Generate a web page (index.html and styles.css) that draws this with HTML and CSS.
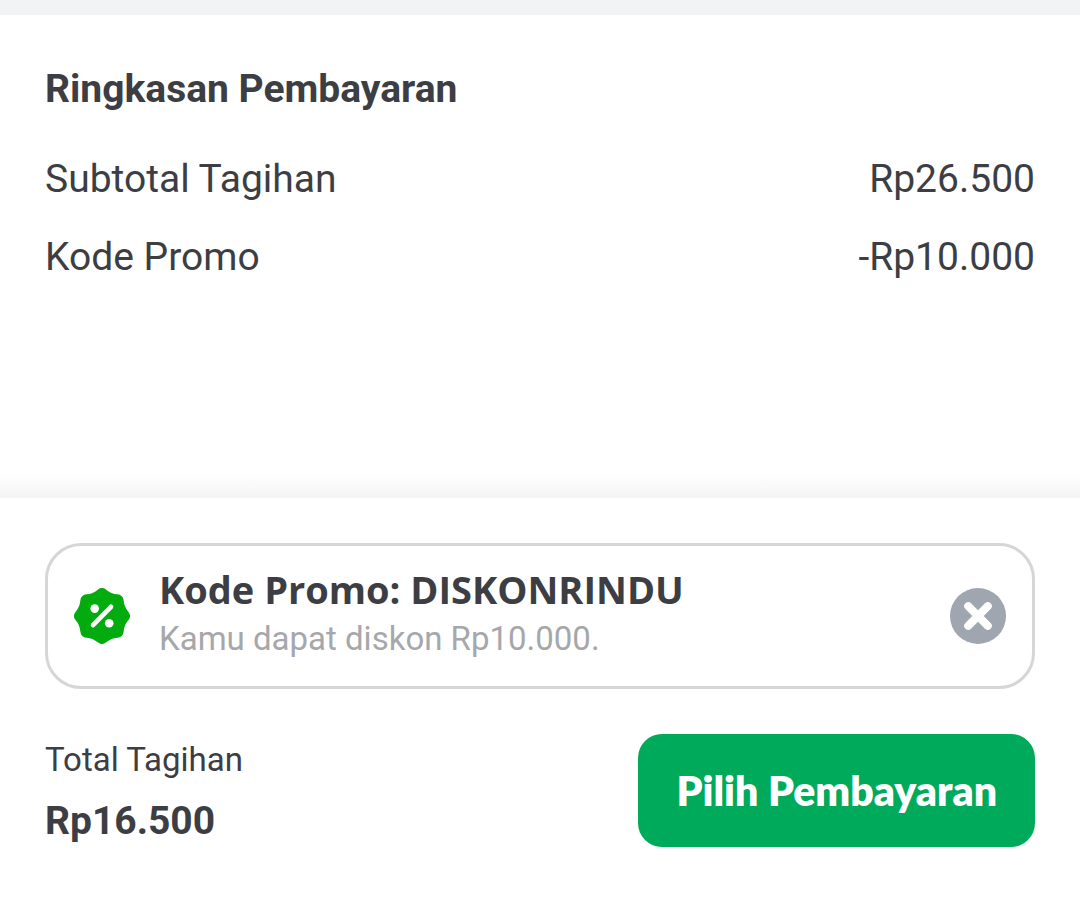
FILE: index.html
```html
<!DOCTYPE html>
<html lang="id">

<head>
    <meta charset="utf-8">
    <meta name="viewport" content="width=device-width, initial-scale=1">
    <title>Ringkasan Pembayaran</title>

    <link rel="stylesheet" href="styles.css">
</head>

<body>

    <main class="summary">
        <h1>Ringkasan Pembayaran</h1>
        <dl>
            <div class="row">
                <dt>Subtotal Tagihan</dt>
                <dd>Rp26.500</dd>
            </div>
            <div class="row">
                <dt>Kode Promo</dt>
                <dd>-Rp10.000</dd>
            </div>
        </dl>
    </main>

    <footer class="checkout">
        <section class="promo">
            <svg class="icon" viewBox="-28 -28 56 56" aria-hidden="true">
                <path fill="#03ac0e" d="M-4.6-26.1Q0-30 4.6-26.1Q9.2-22.2 15.2-21.7Q21.2-21.2 21.7-15.2Q22.2-9.2 26.1-4.6Q30 0 26.1 4.6Q22.2 9.2 21.7 15.2Q21.2 21.2 15.2 21.7Q9.2 22.2 4.6 26.1Q0 30-4.6 26.1Q-9.2 22.2-15.2 21.7Q-21.2 21.2-21.7 15.2Q-22.2 9.2-26.1 4.6Q-30 0-26.1-4.6Q-22.2-9.2-21.7-15.2Q-21.2-21.2-15.2-21.7Q-9.2-22.2-4.6-26.1Z" />
                <path stroke="#fff" stroke-width="4.6" stroke-linecap="round" d="M-9 9.2L9-9.2" />
                <circle cx="-7.3" cy="-7.4" r="4.3" fill="#fff" />
                <circle cx="7.2" cy="7.3" r="4.3" fill="#fff" />
            </svg>
            <div class="promo-text">
                <h2>Kode Promo: DISKONRINDU</h2>
                <p>Kamu dapat diskon Rp10.000.</p>
            </div>
            <button class="remove" type="button" aria-label="Hapus kode promo">
                <svg class="icon" viewBox="-28 -28 56 56" aria-hidden="true">
                    <circle r="28" fill="#9fa6b0" />
                    <path stroke="#fff" stroke-width="8" stroke-linecap="round" d="M-9.8-9.8L9.8 9.8M9.8-9.8L-9.8 9.8" />
                </svg>
            </button>
        </section>

        <div class="pay">
            <div>
                <p class="total-label">Total Tagihan</p>
                <p class="total">Rp16.500</p>
            </div>
            <button class="pay-button" type="button">Pilih Pembayaran</button>
        </div>
    </footer>

</body>

</html>
```

FILE: styles.css
```css
* {
    box-sizing: border-box;
    margin: 0;
    padding: 0;
}

body {
    display: flex;
    flex-direction: column;
    min-height: 100vh;
    background: #fff;
    color: #3c3e44;
    font-family: Roboto, sans-serif;
    font-size: 39px;
    line-height: 48px;
}

.summary {
    flex: 1;
    padding: 50px 45px 45px;
    border-top: 15px solid #f2f3f5;
    background: linear-gradient(to top, #f4f4f5, #fff 24px);
}

h1 {
    margin-bottom: 42px;
    font-size: 39px;
    font-weight: bold;
}

.row {
    display: flex;
    justify-content: space-between;
    margin-bottom: 30px;
}

.checkout {
    padding: 45px 45px 51px;
}

.promo {
    display: flex;
    align-items: center;
    gap: 29px;
    margin-bottom: 45px;
    padding: 19px 26px;
    border: 3px solid #d6d6d6;
    border-radius: 36px;
}

.icon {
    display: block;
    flex: none;
    width: 56px;
    height: 56px;
}

.promo-text {
    flex: 1;
    padding-bottom: 4px;
}

h2 {
    margin-bottom: 2px;
    font-family: "Open Sans", sans-serif;
    font-size: 38px;
    font-weight: bold;
}

.promo-text p {
    color: #a6a7aa;
    font-size: 33px;
}

button {
    border: 0;
    cursor: pointer;
}

.remove {
    border-radius: 50%;
    background: none;
}

.pay {
    display: flex;
    justify-content: space-between;
    align-items: center;
}

.total-label {
    margin-bottom: 13px;
    font-size: 33px;
}

.total {
    font-weight: bold;
}

.pay-button {
    padding: 32px 38px;
    border-radius: 24px;
    background: #00aa5b;
    color: #fff;
    font: 800 41px/49px Lato, sans-serif;
}
```
